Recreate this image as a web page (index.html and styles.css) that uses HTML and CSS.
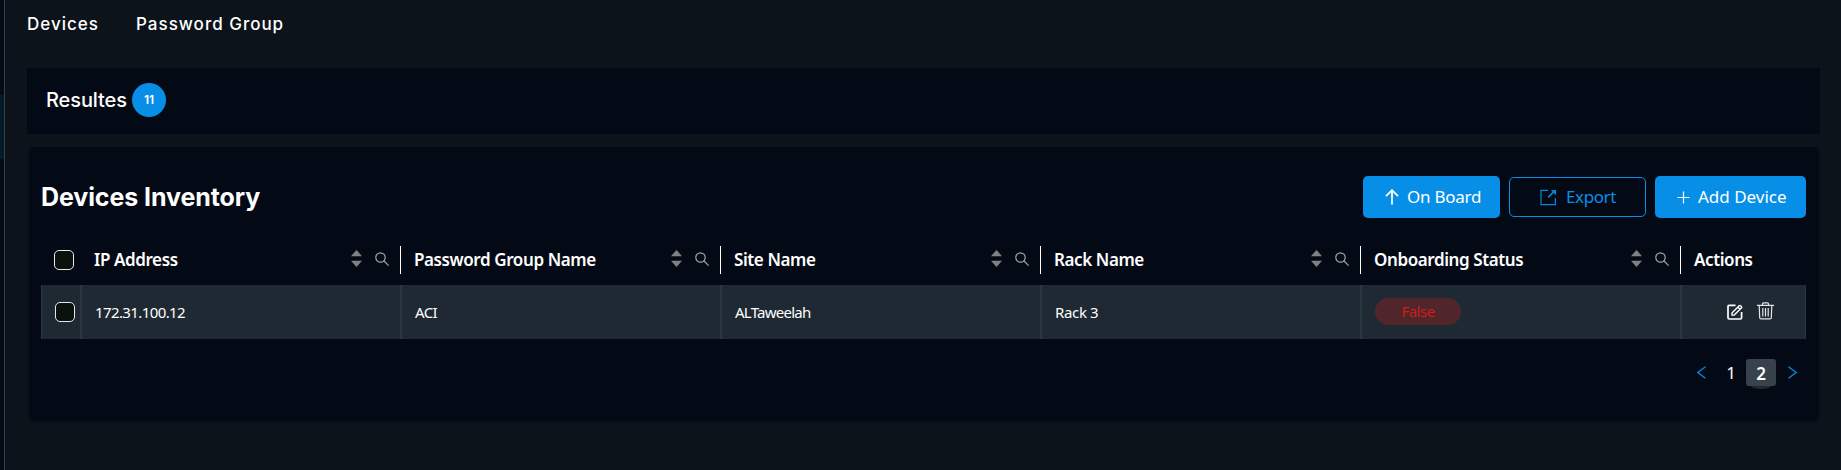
FILE: index.html
```html
<!DOCTYPE html>
<html lang="en">
<head>
<meta charset="utf-8">
<title>Devices Inventory</title>
<link rel="stylesheet" href="styles.css">
</head>
<body>
<svg class="defs" aria-hidden="true">
  <symbol id="sort" viewBox="0 0 11 17"><path d="M5.5 0 11 6.2H0zM5.5 17 0 10.8h11z" fill="#808080"/></symbol>
  <symbol id="search" viewBox="0 0 14 14"><g fill="none" stroke="#a3a3a3" stroke-width="1.2"><circle cx="5.5" cy="5.5" r="4.7"/><path d="M9 9l4.6 4.6"/></g></symbol>
</svg>
<div class="app">
  <aside class="sidebar"><div class="sidebar-active"></div></aside>
  <main class="main">
    <nav class="tabs"><a class="tab-devices">Devices</a><a class="tab-group">Password Group</a></nav>
    <section class="results"><span class="results-label">Resultes</span><span class="count">11</span></section>
    <section class="card">
      <header class="card-head">
        <h1 class="title">Devices Inventory</h1>
        <div class="buttons">
          <button class="btn onboard"><svg width="14" height="16" viewBox="0 0 14 16"><path d="M7 15.5V1.5M1 7.2l6-6 6 6" fill="none" stroke="#fff" stroke-width="1.8"/></svg><span>On Board</span></button>
          <button class="btn export"><svg width="17" height="17" viewBox="0 0 17 17"><path d="M8 1.3H1v14.4h14.4V9" fill="none" stroke="#0687d9" stroke-width="1.2"/><path d="M8.2 8.4l6-6" stroke="#0687d9" stroke-width="1.6"/><path d="M10.8 1h5.2v5.2z" fill="#0687d9"/></svg><span>Export</span></button>
          <button class="btn add"><svg width="13" height="13" viewBox="0 0 13 13"><path d="M6.5.5v12M.5 6.5h12" stroke="#fff" stroke-width="1.2"/></svg><span>Add Device</span></button>
        </div>
      </header>
      <div class="grid head">
        <div class="th check"><i class="box"></i></div>
        <div class="th"><span>IP Address</span><svg class="sort"><use href="#sort"/></svg><svg class="search"><use href="#search"/></svg></div>
        <div class="th"><span>Password Group Name</span><svg class="sort"><use href="#sort"/></svg><svg class="search"><use href="#search"/></svg></div>
        <div class="th"><span>Site Name</span><svg class="sort"><use href="#sort"/></svg><svg class="search"><use href="#search"/></svg></div>
        <div class="th"><span>Rack Name</span><svg class="sort"><use href="#sort"/></svg><svg class="search"><use href="#search"/></svg></div>
        <div class="th"><span>Onboarding Status</span><svg class="sort"><use href="#sort"/></svg><svg class="search"><use href="#search"/></svg></div>
        <div class="th last"><span>Actions</span></div>
      </div>
      <div class="grid row">
        <div class="td check"><i class="box"></i></div>
        <div class="td"><span class="c-ip">172.31.100.12</span></div>
        <div class="td"><span class="c-aci">ACI</span></div>
        <div class="td"><span class="c-site">ALTaweelah</span></div>
        <div class="td"><span class="c-rack">Rack 3</span></div>
        <div class="td"><span class="badge">False</span></div>
        <div class="td actions">
          <svg width="16" height="16" viewBox="0 0 16 16" fill="none" stroke="#fff"><path d="M8.5 1.4H2.2q-1.2 0-1.2 1.2v11.2q0 1.2 1.2 1.2h11.2q1.2 0 1.2-1.2V8" stroke-width="1.7"/><path d="M5 8.9 12.1 1.8q.8-.8 1.6 0l.6.6q.8.8 0 1.6L7.2 11.1H5zM10.8 3.1l2.2 2.2" stroke-width="1.4"/></svg>
          <svg class="trash" width="17" height="18" viewBox="0 0 17 18" fill="none" stroke="#e4e6e8" stroke-width="1.2"><path d="M0 3.3h17M5.5 3V1.8q0-1 1-1h4q1 0 1 1V3M2.2 3.5l.5 12.2q.1 1.2 1.2 1.2h9.2q1.1 0 1.2-1.2l.5-12.2M5.8 6v8.5M8.5 6v8.5M11.2 6v8.5"/></svg>
        </div>
      </div>
      <div class="pager">
        <svg width="9" height="13" viewBox="0 0 9 13"><path d="M8.5.7.9 6.5l7.6 5.8" fill="none" stroke="#0a86dc" stroke-width="1.4"/></svg>
        <span class="page">1</span>
        <span class="page current">2</span>
        <svg width="9" height="13" viewBox="0 0 9 13"><path d="M.5.7l7.6 5.8-7.6 5.8" fill="none" stroke="#0a86dc" stroke-width="1.4"/></svg>
      </div>
    </section>
  </main>
</div>
</body>
</html>
```
FILE: styles.css
```css
* { box-sizing: border-box; }
body { margin: 0; background: #0c131b; color: #fff; font-family: "Noto Sans", sans-serif; overflow: hidden; }
svg { display: block; flex: none; }
.defs { display: none; }
.app { display: flex; height: 470px; }
.sidebar { width: 5px; flex: none; padding-top: 95px; background: #050a14; border-right: 1px solid #343f49; }
.sidebar-active { height: 64px; background: #041c2a; }
.main { flex: 1; padding: 0 21px 0 22px; }
.tabs { display: flex; gap: 38px; height: 68px; padding-top: 13px; font: 450 17px/22px Inter, sans-serif; }
.tab-devices { width: 71px; letter-spacing: 1px; }
.tab-group { letter-spacing: 1px; white-space: nowrap; }
.results { display: flex; align-items: center; height: 66px; padding: 0 19px 2px; background: #040a15; }
.results-label { width: 86px; font: 450 20px/26px Inter, sans-serif; letter-spacing: -.1px; }
.count { width: 34px; height: 34px; border-radius: 50%; background: #078fe8; font: 600 12px/33px Inter, sans-serif; text-align: center; }
.card { margin: 13px 1px 0 2px; height: 274px; padding: 29px 13px 0 12px; background: #040a15; border-radius: 5px; box-shadow: 0 1px 3px #0b1018; }
.card-head { display: flex; justify-content: space-between; height: 61px; }
.title { margin: 6px 0 0; font: 700 25px/30px Inter, sans-serif; white-space: nowrap; letter-spacing: -.1px; }
.buttons { display: flex; gap: 9px; height: 42px; align-items: center; }
.btn { display: flex; align-items: center; height: 42px; padding: 0; border: 0; border-radius: 5px; background: #078fe8; color: #fff; font: 17px/24px "Noto Sans", sans-serif; white-space: nowrap; }
.onboard { width: 137px; padding-left: 22px; gap: 8px; letter-spacing: -.25px; }
.export { width: 137px; height: 40px; padding-left: 30px; gap: 9px; border: 1px solid #078fe8; background: transparent; color: #078fe8; letter-spacing: -.4px; }
.add { width: 151px; padding-left: 22px; gap: 8px; }
.grid { display: grid; grid-template-columns: 40px repeat(5, 320px) 125px; }
.head { height: 48px; padding: 9px 0 11px; font-size: 17px; font-weight: 600; line-height: 26px; letter-spacing: -.4px; }
.th { display: flex; align-items: center; padding: 0 12px 0 13px; border-right: 1px solid #fff; white-space: nowrap; }
.th.last, .th.check { border-right: 0; }
.th .sort { width: 11px; height: 17px; margin: -3px 13px 0 auto; }
.th .search { width: 14px; height: 14px; margin: -3px -1px 0 0; }
.box { width: 20px; height: 20px; flex: none; border: 1px solid #e8e8e8; border-radius: 5px; background: #09120d; }
.th .box { margin-top: -1px; }
.row { height: 54px; background: #1e2933; font-size: 15px; }
.td { display: flex; align-items: center; padding: 0 13px 1px; border: solid #2b3640; border-width: 0 1px; white-space: nowrap; }
.td.check { padding-bottom: 0; }
.c-ip { letter-spacing: -.6px; }
.c-aci { letter-spacing: -.6px; }
.c-site { letter-spacing: -.75px; }
.c-rack { letter-spacing: -.35px; }
.badge { width: 86px; height: 27px; border-radius: 14px; background: #51262b; color: #cf1b1b; line-height: 27px; text-align: center; letter-spacing: -.5px; }
.actions { padding-left: 45px; padding-bottom: 0; gap: 14px; }
.trash { margin-top: -2px; }
.pager { display: flex; align-items: center; height: 27px; margin-top: 20px; padding-right: 9px; justify-content: flex-end; font-size: 17px; line-height: 29px; }
.page { width: 30px; text-align: center; }
.pager .page:first-of-type { margin-left: 10px; }
.current { position: relative; height: 27px; margin-right: 12px; border-radius: 3px; background: #37424d; font-weight: 600; }
.current::after { content: ""; position: absolute; left: 5px; top: 27px; width: 20px; height: 3px; border-radius: 0 0 10px 10px / 0 0 3px 3px; background: #26272b; }
```
